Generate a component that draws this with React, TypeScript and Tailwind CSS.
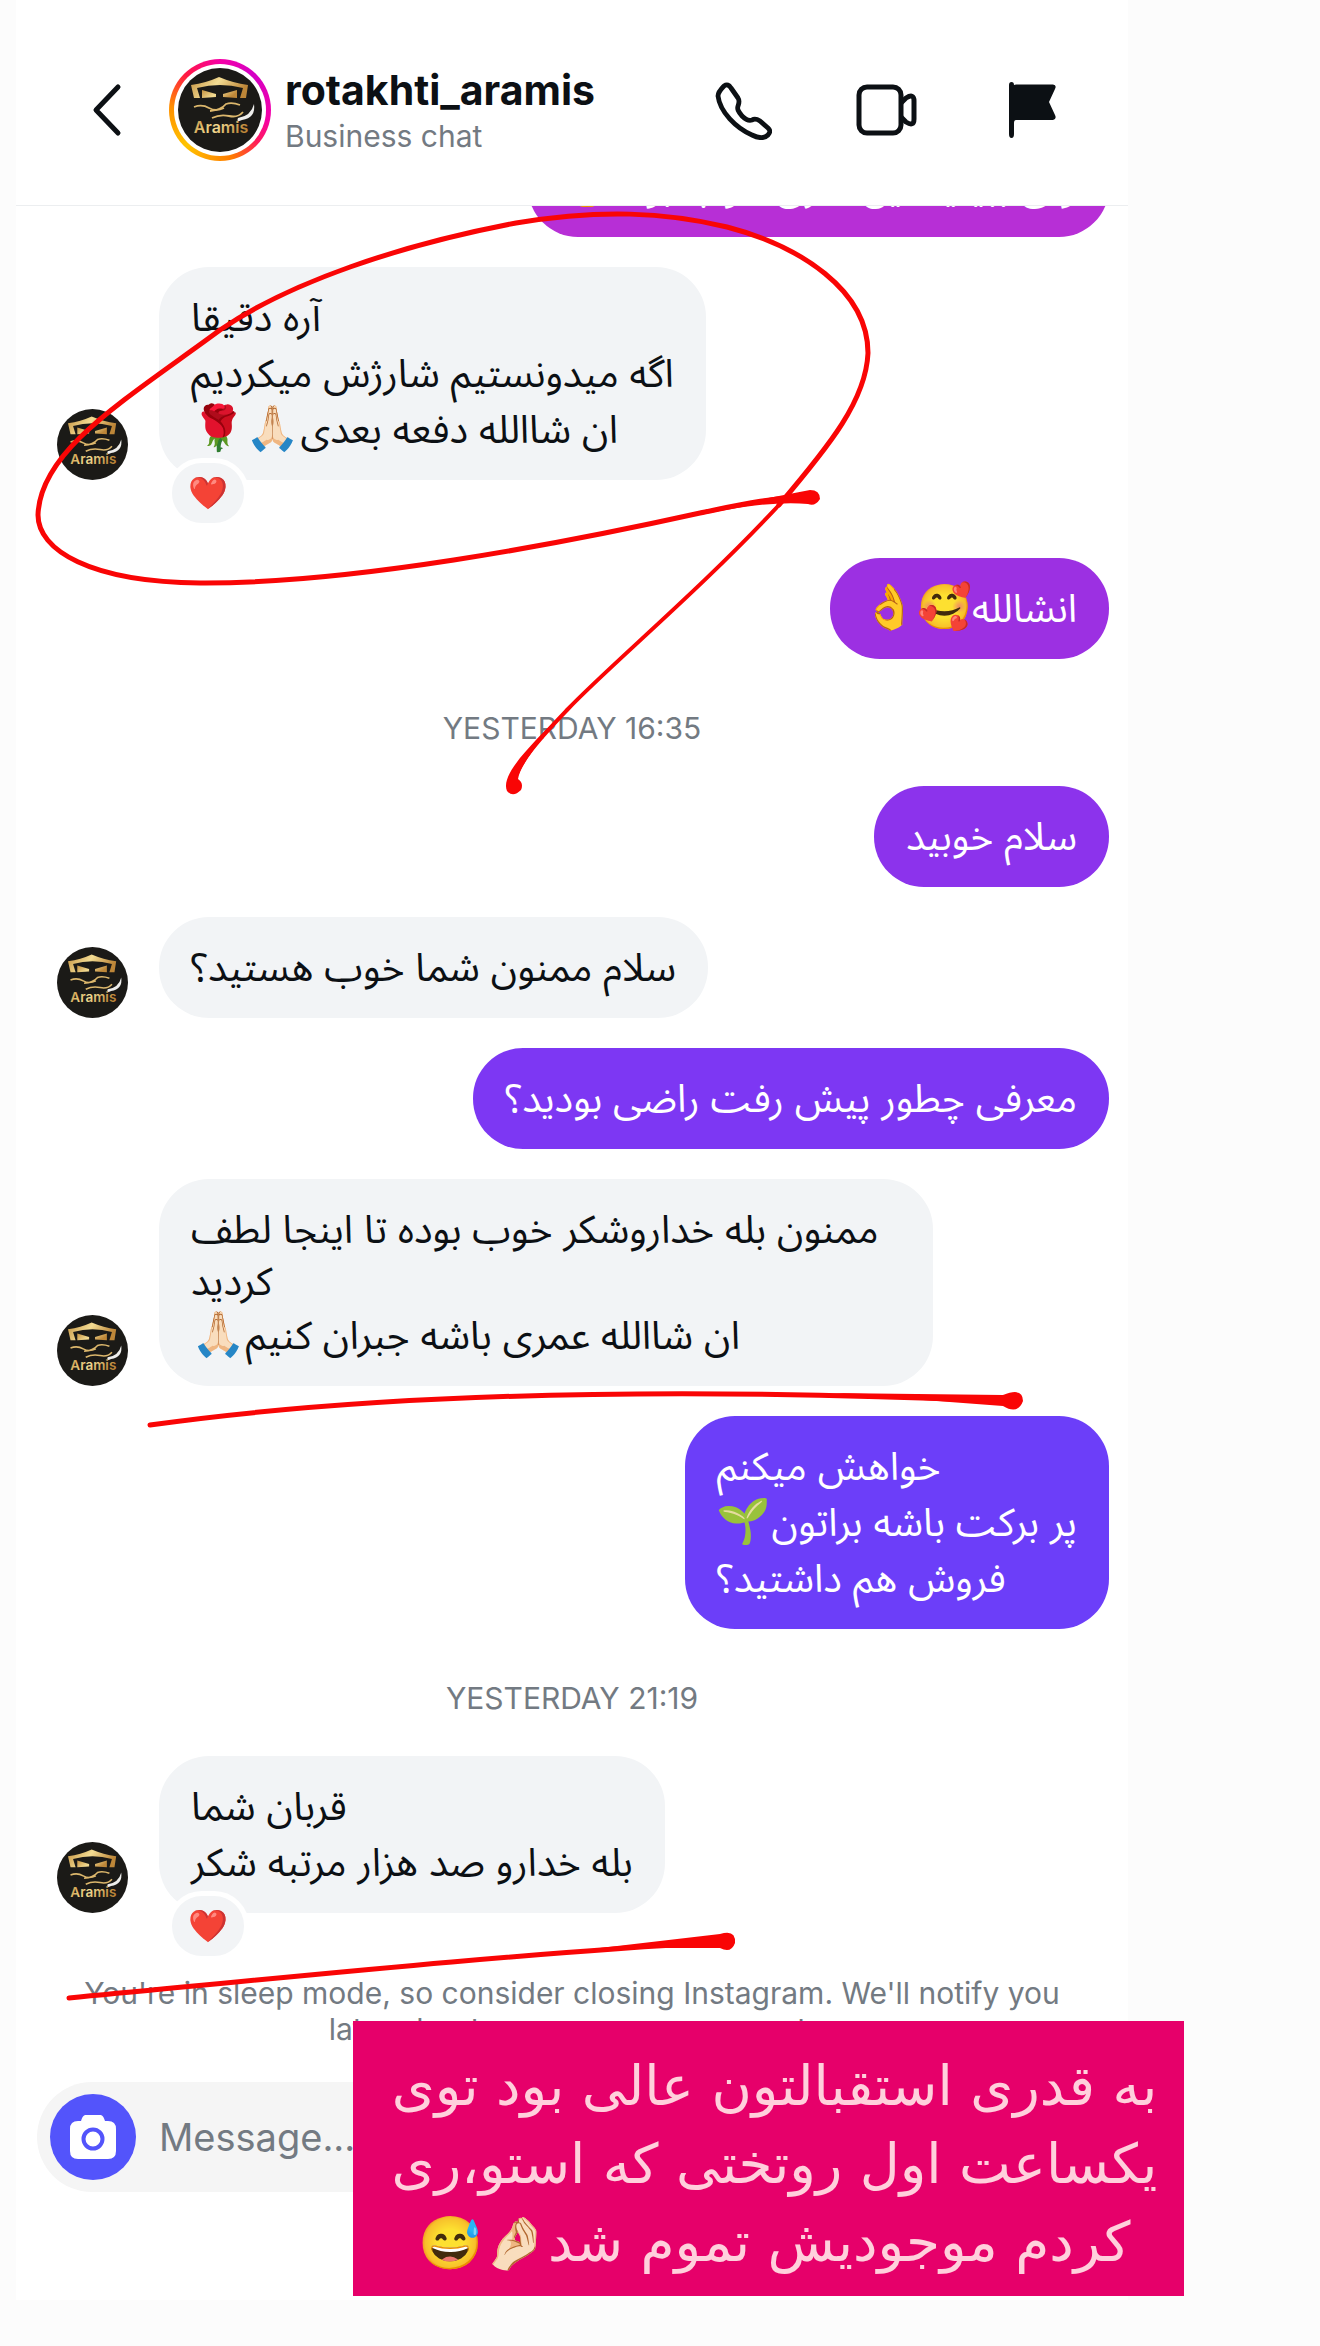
import { ReactNode } from 'react';

interface BubbleProps {
  color: string;
  children: ReactNode;
}

function Avatar({ className }: { className: string }) {
  return (
    <svg viewBox="0 0 84 84" className={className} role="img" aria-label="Aramis">
      <defs>
        <linearGradient id="gold" x1="0" x2="1" y1="0" y2="0.3">
          <stop offset="0" stopColor="#c4913f" />
          <stop offset="0.5" stopColor="#f3dc93" />
          <stop offset="1" stopColor="#bd8638" />
        </linearGradient>
      </defs>
      <circle cx="42" cy="42" r="42" fill="#1b1a17" />
      <path d="M13 17 Q28 15 41 9 Q55 15 70 17 L68 30 H62 L65 20 Q42 14 19 20 L22 30 H16 Z" fill="url(#gold)" />
      <path d="M24 22 L38 26 V29 L24 30 Z M45 26 L59 22 V30 L45 29 Z" fill="url(#gold)" />
      <path d="M16 39 Q24 36 31 40 T46 40 M32 43 Q43 42 48 36 Q54 34 62 37 M34 50 Q42 46 51 48 T65 44" fill="none" stroke="#dcb76c" strokeWidth="1.8" />
      <path d="M76 36 Q78 50 64 52 Q58 55 60 50 Q73 48 76 36Z" fill="#eeeeec" />
      <text x="43" y="65" textAnchor="middle" fill="url(#gold)" fontSize="16" fontWeight="600" fontFamily="Inter, sans-serif">Aramis</text>
    </svg>
  );
}

function Sent({ color, children }: BubbleProps) {
  return (
    <div className="flex justify-end pr-[19px]">
      <div className={`rounded-[50px] px-8 pt-[22px] pb-[23px] text-white ${color}`}>{children}</div>
    </div>
  );
}

function Received({ reaction, children }: { reaction?: boolean; children: ReactNode }) {
  return (
    <div className={`flex items-end gap-[31px] pl-[41px] ${reaction ? 'mb-12' : ''}`}>
      <Avatar className="size-[71px] shrink-0" />
      <div className="relative max-w-[774px] rounded-[50px] bg-[#f2f4f6] px-8 pt-[22px] pb-[23px] text-[#0c1014]">
        {children}
        {reaction && (
          <span className="absolute -bottom-12 left-2 flex h-[70px] w-[82px] items-center justify-center rounded-full border-[5px] border-white bg-[#f2f4f6] text-[32px]">❤️</span>
        )}
      </div>
    </div>
  );
}

function Line({ children }: { children: ReactNode }) {
  return <p dir="rtl" className="text-left text-[39px] leading-[56px]">{children}</p>;
}

function Emoji({ children }: { children: ReactNode }) {
  return <span className="font-['Noto_Color_Emoji'] text-[44px] leading-none">{children}</span>;
}

function DateLabel({ children }: { children: ReactNode }) {
  return <p className="pt-[21px] pb-[10px] text-center text-[30px] leading-9 text-[#737a82]">{children}</p>;
}

function Header() {
  return (
    <header className="flex items-center border-b border-[#eceef0] pt-[59px] pr-[70px] pb-11 pl-[75px] text-[#0c1014]">
      <button aria-label="Back">
        <svg viewBox="0 0 32 54" className="h-[54px] w-8" fill="none" stroke="currentColor" strokeWidth="5" strokeLinecap="round" strokeLinejoin="round">
          <path d="M27 4 L5 27 L27 50" />
        </svg>
      </button>
      <div className="ml-[46px] rounded-full bg-[conic-gradient(#f600a6,#d300c5_12%,#f600a6_28%,#ff1a5c_36%,#ff7a00_46%,#ffc400_62%,#ff9000_76%,#ff1744_88%,#f600a6)] p-[5px]">
        <div className="rounded-full bg-white p-1">
          <Avatar className="size-[84px]" />
        </div>
      </div>
      <div className="ml-[14px] flex-1 pt-1">
        <h1 className="text-[41px] leading-[48px] font-bold">rotakhti_aramis</h1>
        <p className="text-[30px] leading-[44px] text-[#737a82]">Business chat</p>
      </div>
      <div className="flex items-center gap-[83px]">
        <button aria-label="Audio call">
          <svg viewBox="0 0 60 60" className="size-[60px]" fill="none" stroke="currentColor" strokeWidth="4.8" strokeLinejoin="round">
            <path d="M6 16 C6 12 9 9 12 6 C15 4 17 5 19 8 L26 18 C28 21 27 23 26 26 C25 29 26 31 30 36 C34 40 37 41 40 40 C43 38 45 39 48 41 L56 48 C59 51 58 52 56 55 C52 59 46 58 40 55 C24 48 8 32 6 16Z" />
          </svg>
        </button>
        <button aria-label="Video call">
          <svg viewBox="0 0 62 54" className="h-[54px] w-[62px]" fill="none" stroke="currentColor" strokeWidth="5" strokeLinejoin="round">
            <rect x="4" y="4" width="42" height="46" rx="8" />
            <path d="M46 20 L51 15 Q59 10 59 18 V36 Q59 44 51 39 L46 34" />
          </svg>
        </button>
        <button aria-label="Label chat" className="ml-2">
          <svg viewBox="0 0 50 56" className="h-14 w-[50px]" fill="currentColor">
            <path d="M1 3 Q1 0 3.500 0 T6 3 L8 2.500 H45 Q49 3 47 7 L41 20 L47 33 Q49 37 45 38 H8 Q6 38 6 41 V52 Q6 56 3.500 56 T1 52Z" />
          </svg>
        </button>
      </div>
    </header>
  );
}

function Marker() {
  return (
    <svg viewBox="0 0 1320 2346" className="pointer-events-none absolute top-0 -left-4 w-[1320px] max-w-none" fill="none" stroke="#f90505" strokeLinecap="round" aria-hidden="true">
      <path d="M812 497 C770 497 730 507 700 513 C560 544 350 584 200 583 C90 582 38 550 38 515 C40 450 125 400 220 330 C290 282 400 245 516 223 C600 209 665 212 727 227 C800 246 868 290 868 353 C866 400 830 445 779 505" strokeWidth="5" />
      <path d="M779 505 C700 590 610 665 567 710 C545 733 514 765 514 786" strokeWidth="4" />
      <path d="M567 709 C530 745 500 775 507 791 Q513 798 521 790 Q524 783 518 779 C520 763 550 728 567 711Z M700 511 L810 490 Q820 490 820 499 Q815 507 808 504 Q770 500 700 515Z" fill="#f90505" stroke="none" />
      <path d="M150 1425 C400 1390 700 1388 1000 1401" strokeWidth="5" />
      <path d="M830 1393 L1003 1395 Q1023 1387 1023 1401 Q1018 1415 1003 1406 Z" fill="#f90505" stroke="none" />
      <path d="M69 1998 C300 1976 500 1955 720 1942" strokeWidth="5" />
      <path d="M600 1948 L720 1934 Q736 1929 735 1943 Q731 1954 720 1948 Z" fill="#f90505" stroke="none" />
    </svg>
  );
}

export default function App() {
  return (
    <div className="min-h-screen overflow-hidden bg-[#fcfcfc] pr-48 pl-4 font-[Inter,'Noto_Sans_Arabic','Noto_Sans','DejaVu_Sans',sans-serif]">
      <div className="relative bg-white pb-[108px]">
        <Header />
        <main className="flow-root">
          {/* older message, scrolled under the header */}
          <div className="overflow-hidden">
            <div className="-mt-[70px]">
              <Sent color="bg-[#b72fd6]">
                <Line>ولی ببینید این سری خوب بود <Emoji>😊</Emoji></Line>
              </Sent>
            </div>
          </div>
          <div className="flex flex-col gap-[30px] pt-[30px]">
            <Received reaction>
              <Line>آره دقیقا</Line>
              <Line>اگه میدونستیم شارژش میکردیم</Line>
              <Line>ان شاالله دفعه بعدی<Emoji>🙏🏻🌹</Emoji></Line>
            </Received>
            <Sent color="bg-[#9c30e2]"><Line>انشالله<Emoji>🥰👌</Emoji></Line></Sent>
            <DateLabel>YESTERDAY 16:35</DateLabel>
            <Sent color="bg-[#8c33ec]"><Line>سلام خوبید</Line></Sent>
            <Received><Line>سلام ممنون شما خوب هستید؟</Line></Received>
            <Sent color="bg-[#7d37f3]"><Line>معرفی چطور پیش رفت راضی بودید؟</Line></Sent>
            <Received>
              <p dir="rtl" className="pt-0.5 text-left text-[39px] leading-[52px]">ممنون بله خداروشکر خوب بوده تا اینجا لطف کردید</p>
              <Line>ان شاالله عمری باشه جبران کنیم<Emoji>🙏🏻</Emoji></Line>
            </Received>
            <Sent color="bg-[#6c3ef9]">
              <Line>خواهش میکنم</Line>
              <Line>پر برکت باشه براتون<Emoji>🌱</Emoji></Line>
              <Line>فروش هم داشتید؟</Line>
            </Sent>
            <DateLabel>YESTERDAY 21:19</DateLabel>
            <Received reaction>
              <Line>قربان شما</Line>
              <Line>بله خدارو صد هزار مرتبه شکر</Line>
            </Received>
          </div>
        </main>
        <p className="mt-[14px] px-14 text-center text-[30px] leading-9 text-[#737a82]">
          You're in sleep mode, so consider closing Instagram. We'll notify you later about any messages you get.
        </p>
        <div className="mt-[35px] mr-5 ml-[21px] flex h-[110px] items-center gap-[23px] rounded-full bg-[#f5f5f5] px-[13px]">
          <button aria-label="Camera" className="flex size-[86px] shrink-0 items-center justify-center rounded-full bg-[#5354fb]">
            <svg viewBox="0 0 48 46" className="h-[46px] w-12">
              <path d="M12 7 C14 1 15 1 19 1 H29 C33 1 34 1 36 7 H39 Q47 7 47 15 V37 Q47 45 39 45 H9 Q1 45 1 37 V15 Q1 7 9 7Z" fill="#fff" />
              <circle cx="24" cy="25" r="9.500" fill="none" stroke="#5354fb" strokeWidth="4" />
            </svg>
          </button>
          <input aria-label="Message" placeholder="Message..." className="min-w-0 flex-1 bg-transparent text-[38px] outline-none placeholder:text-[#737a82]" />
        </div>
        <Marker />
        <div dir="rtl" className="absolute -right-14 bottom-1 left-[337px] bg-[#e6006a] pt-[26px] pb-[15px] pl-3 text-center font-['DejaVu_Sans'] text-[55px] leading-[78px] text-[#ffd0dc]">
          <p>به قدری استقبالتون عالی بود توی</p>
          <p>یکساعت اول روتختی که استو،ری</p>
          <p>کردم موجودیش تموم شد<span className="font-['Noto_Color_Emoji'] text-[52px] leading-none">🤌🏻😅</span></p>
        </div>
      </div>
    </div>
  );
}
